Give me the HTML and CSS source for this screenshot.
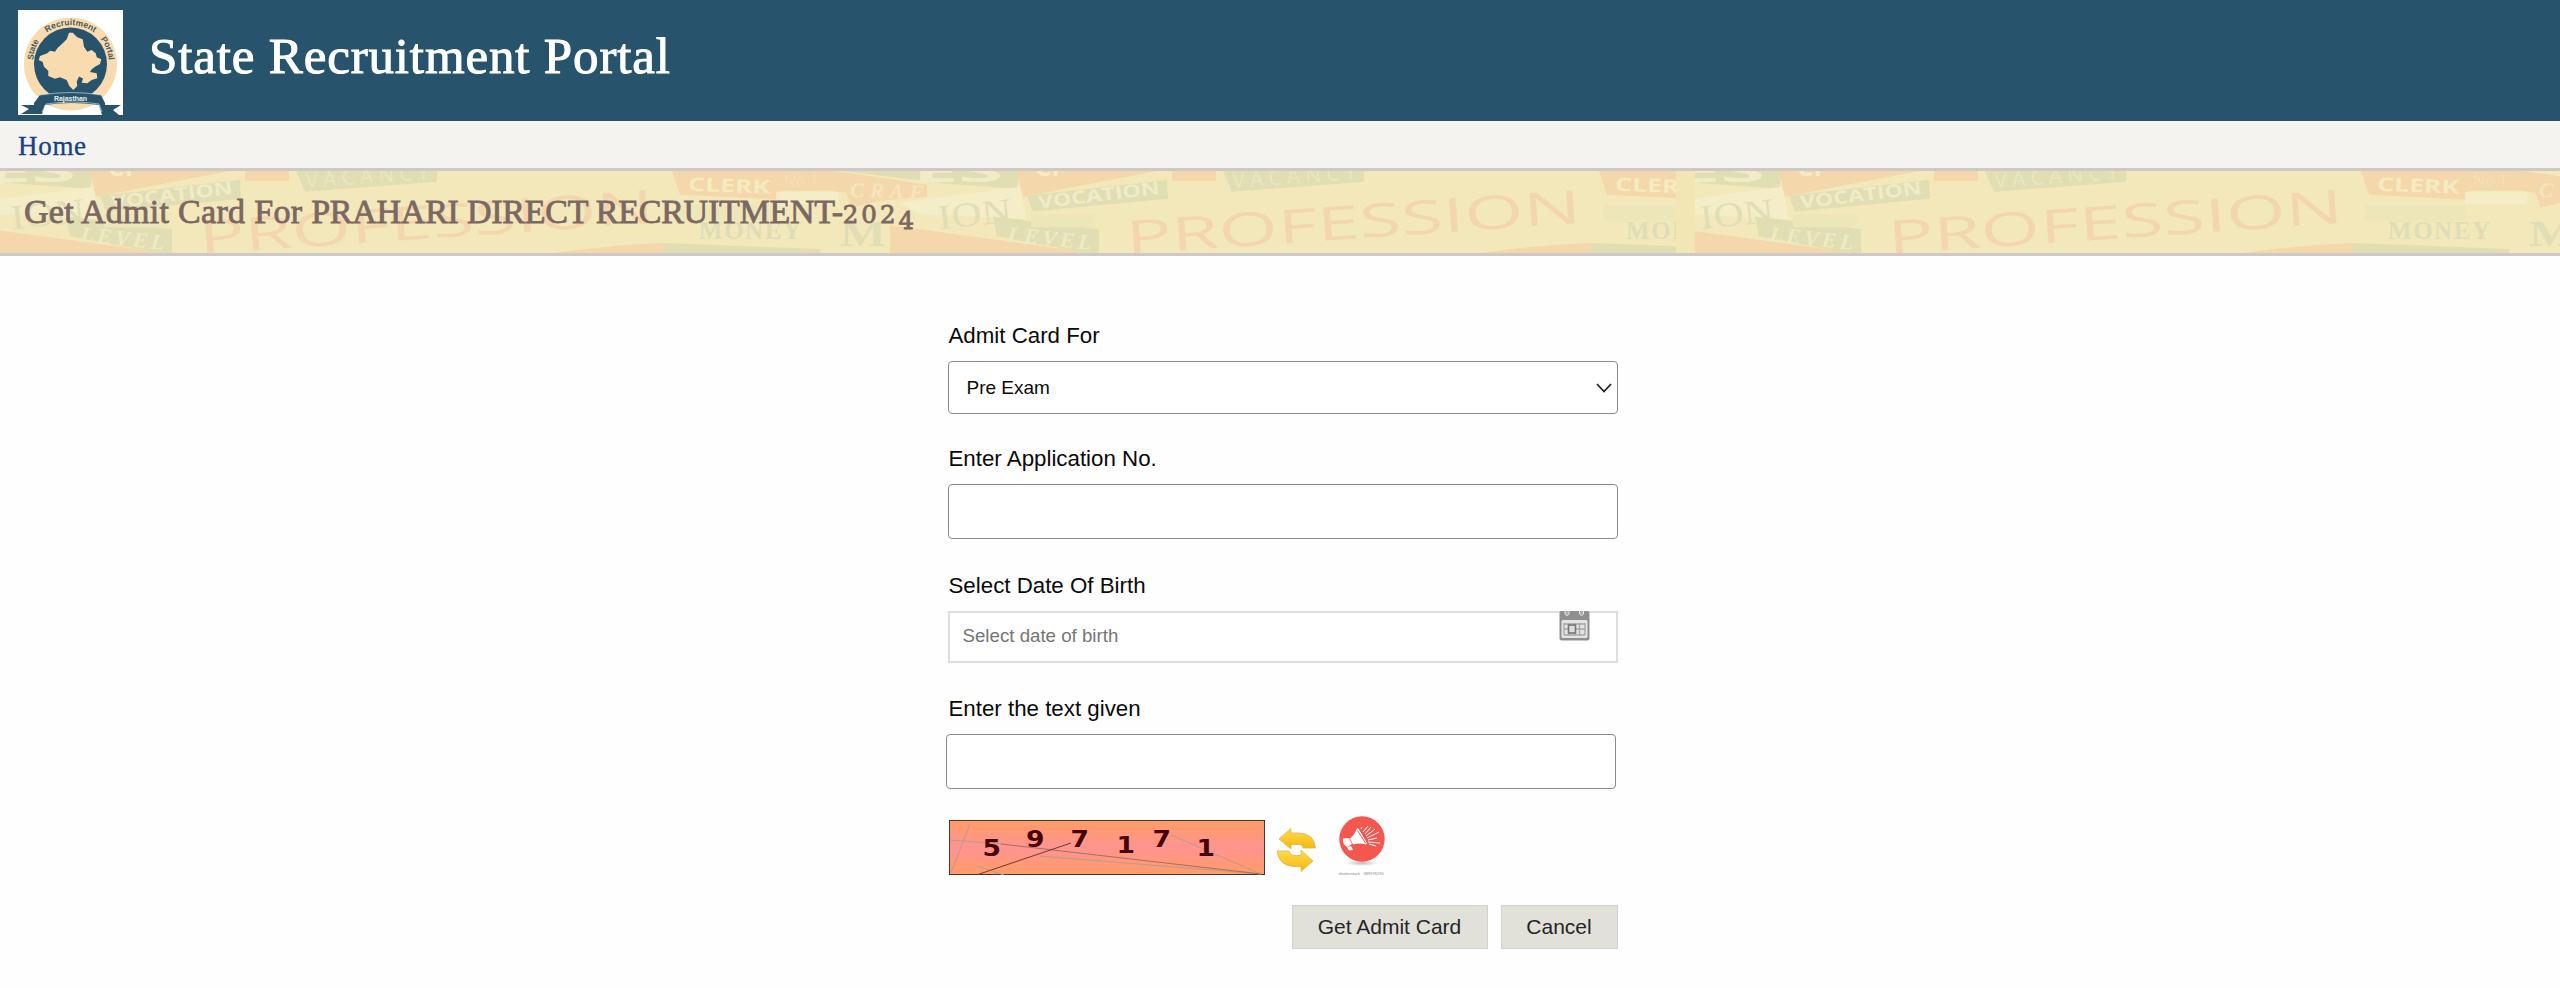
FILE: index.html
```
<!DOCTYPE html>
<html>
<head>
<meta charset="UTF-8">
<title>State Recruitment Portal</title>
<link rel="stylesheet" href="styles.css">
</head>
<body>

<div class="header">
	<svg class="logo" viewBox="0 0 105 105">
		<defs>
			<path id="arcLeft" d="M15.300 50A38 38 0 0 1 24 27"/>
			<path id="arcTop" d="M29 22.500A41 41 0 0 1 76 22.500"/>
			<path id="arcRight" d="M82.500 29A40 40 0 0 1 91 54"/>
		</defs>
		<rect width="105" height="105" fill="#fff"/>
		<circle cx="52.500" cy="54" r="46.500" fill="#f8dbae"/>
		<circle cx="52.500" cy="54" r="36.500" fill="#27546c"/>
		<path fill="#f8dbae" d="M51 22.700L54.700 22.700 59.300 27.300 64.700 29.300 66 36.700 69.300 41.700 73.700 40 77.700 43.300 78.700 47.300 83.300 49.300 82 54 77 56.700 73.700 59.300 72 62 78.700 63.300 79.300 68.300 73.700 70 69.300 73.300 63.700 72.700 65 68.500 61 66.500 58.700 71.700 59.300 76 55.300 80 51.300 76 48.700 70 42 67.300 37 68.700 30.300 66 30.300 60.700 26 56.700 24.700 52 20.700 50 22 46 29.300 43.300 32 40.700 37 41.700 39.300 38.300 44.700 33.300 48.700 29.300z"/>
		<path fill="#27546c" d="M3 95h13v-2l6-8q31-6 61 0l4 8v2h16l-8 5 6 5H84l-3-10q-28-4-54 0l-3 9H3l8-5z"/>
		<path fill="none" stroke="#dfe8ec" stroke-width=".6" d="M22 85q31-5 61 0M24 102l4-8q26-4 53 0l3 8"/>
		<text class="logo-text"><textPath href="#arcLeft" textLength="20">State</textPath></text>
		<text class="logo-text"><textPath href="#arcTop" textLength="50">Recruitment</textPath></text>
		<text class="logo-text"><textPath href="#arcRight" textLength="23">Portal</textPath></text>
		<text class="logo-ribbon" x="36" y="91" textLength="33">Rajasthan</text>
	</svg>
	<div class="site-name">State Recruitment Portal</div>
</div>

<div class="menu"><a href="#">Home</a></div>

<div class="banner">
	<svg class="banner-bg" viewBox="0 0 2560 83" preserveAspectRatio="none">
		<defs>
			<clipPath id="cut"><rect x="0" y="0" width="1676" height="83"/></clipPath>
			<clipPath id="last"><rect x="1695" y="0" width="865" height="83"/></clipPath>
			<g id="collage">
				<path fill="#f2e8ba" d="M0 0H960V83H0z"/>
				<path fill="#e0deb2" d="M-84 0H93L90 18 20 13z"/>
				<path fill="#f4d7aa" d="M90 0H230L96 26zM-37 55L165 83H-37z"/>
				<path fill="#f5edc8" d="M-27 32L93 16 100 49 -10 43z"/>
				<path fill="#e0deb2" d="M100 25L240 9 241 28 106 41zM66 46L172 59V83H160L70 66zM296 0H437V11L305 21z"/>
				<path fill="#f4d7aa" d="M245 0h44v10h-44zM672 0H835L955 18 950 24 880 30 852 37 846 22 832 20H780V29L680 24z"/>
				<path fill="#f5edc8" d="M776 21H838V34H776z" opacity=".8"/>
				<path fill="#ece6b9" d="M676 35H776V50H676zM104 44H168V57H104z"/>
				<path fill="#f4d7aa" d="M554 83Q610 75 664 73V83z"/>
				<path fill="#e0deb2" d="M664 83V73L820 79V83z"/>
				<text class="c-sans" x="-14" y="11" textLength="90" lengthAdjust="spacingAndGlyphs" font-size="30" fill="#f2ebc7">ES</text>
				<text class="c-sans" x="108" y="5" font-size="26" fill="#f6ebc6">CI</text>
				<text class="c-sans" x="112" y="38" transform="rotate(-7 112 38)" textLength="122" lengthAdjust="spacingAndGlyphs" font-size="18" fill="#f0ebc8">VOCATION</text>
				<text class="c-serif" x="12" y="59" transform="rotate(-6 12 59)" textLength="74" lengthAdjust="spacingAndGlyphs" font-size="35" fill="#e1deb6">ION</text>
				<text class="c-italic" x="80" y="71" transform="rotate(6 80 71)" textLength="84" font-size="22" fill="#eeeac6">LEVEL</text>
				<text class="c-thin" x="306" y="17" transform="rotate(-4 306 17)" textLength="124" font-size="21" fill="#eae6bf">VACANCY</text>
				<text class="c-thin" x="200" y="84" transform="rotate(-4 204 84)" textLength="456" lengthAdjust="spacingAndGlyphs" font-size="47" fill="#f3d5ae">PROFESSION</text>
				<text class="c-sans" x="688" y="20" transform="rotate(2 688 20)" textLength="82" lengthAdjust="spacingAndGlyphs" font-size="19" fill="#f5ebc1">CLERK</text>
				<text class="c-thin" x="784" y="15" font-size="16" fill="#f4dfb6">No.1</text>
				<text class="c-bold" x="699" y="69" textLength="102" font-size="25" fill="#dfddb8">MONEY</text>
				<text class="c-bold" x="840" y="76" textLength="46" lengthAdjust="spacingAndGlyphs" font-size="36" fill="#e1deb6">M</text>
				<text class="c-italic" x="850" y="26" transform="rotate(2 850 26)" textLength="92" font-size="21" fill="#f5e5bf">CRAFT</text>
			</g>
		</defs>
		<rect width="2560" height="83" fill="#f2e6b4"/>
		<g clip-path="url(#cut)">
			<use href="#collage"/>
			<use href="#collage" x="927"/>
		</g>
		<g clip-path="url(#last)">
			<use href="#collage" x="1689"/>
		</g>
	</svg>
	<h1>Get Admit Card For <span class="post">PRAHARI DIRECT RECRUITMENT-</span><span class="num">202<span class="low">4</span></span></h1>
</div>

<form class="admit-form">
	<label for="cardType">Admit Card For</label>
	<div class="field">
		<select id="cardType" class="box select">
			<option>Pre Exam</option>
		</select>
		<svg class="arrow" viewBox="0 0 16 12"><path d="M1 2l7 7.500 7-7.500" fill="none" stroke="#222" stroke-width="1.800"/></svg>
	</div>

	<label for="appNo">Enter Application No.</label>
	<input type="text" id="appNo" class="box">

	<label for="dob">Select Date Of Birth</label>
	<div class="field">
		<input type="text" id="dob" class="box date" placeholder="Select date of birth">
		<svg class="calendar" viewBox="0 0 31 30">
			<rect x=".5" y="0" width="30" height="29.500" rx="2" fill="#8f8f8f"/>
			<rect x="2.500" y="9" width="26" height="18" rx="1.500" fill="#e4e4e4"/>
			<path d="M6 0v3q2 3 4 0V0M20.500 0v3q2 3 4 0V0" fill="#aaa" stroke="#e6e6e6"/>
			<path d="M5 13h21M5 18h21M5 24h21M5 12v12M10 12v12M15.500 12v12M20.500 12v12M26 12v12" stroke="#a5a5a5" stroke-width="1.300"/>
			<rect x="9.500" y="14" width="7" height="8" fill="#ddd" stroke="#777" stroke-width="1.600"/>
		</svg>
	</div>

	<label for="captcha">Enter the text given</label>
	<input type="text" id="captcha" class="box captcha-input">

	<div class="captcha-row">
		<svg class="captcha" viewBox="0 0 316 55">
			<defs>
				<linearGradient id="salmon" x1="0" y1="0" x2="0" y2="1">
					<stop offset="0" stop-color="#ff9c66"/>
					<stop offset=".5" stop-color="#ff9490"/>
					<stop offset="1" stop-color="#ff9c66"/>
				</linearGradient>
			</defs>
			<rect x=".5" y=".5" width="315" height="54" fill="url(#salmon)" stroke="#4a3430"/>
			<g fill="none" stroke="#b99b92">
				<path d="M2 53L21 4M1 20L55 24M90 36L312 54M222 15L312 54M28 46L55 55"/>
				<path d="M52 24L312 54" stroke="#a07068"/>
				<path d="M29 54.500L122 23" stroke="#6e3a30"/>
			</g>
			<g class="digits">
				<text x="33.500" y="36" textLength="18.500" lengthAdjust="spacingAndGlyphs">5</text>
				<text x="77" y="26.500" textLength="18.500" lengthAdjust="spacingAndGlyphs">9</text>
				<text x="121.500" y="26.500" textLength="18.500" lengthAdjust="spacingAndGlyphs">7</text>
				<text x="167.500" y="32.500" textLength="18.500" lengthAdjust="spacingAndGlyphs">1</text>
				<text x="203.500" y="26.500" textLength="18.500" lengthAdjust="spacingAndGlyphs">7</text>
				<text x="247.500" y="35.500" textLength="18.500" lengthAdjust="spacingAndGlyphs">1</text>
			</g>
		</svg>
		<svg class="refresh" viewBox="0 0 42 46">
			<defs>
				<linearGradient id="gold" x1="0" y1="0" x2="0" y2="1">
					<stop offset="0" stop-color="#ffdc4c"/>
					<stop offset="1" stop-color="#f7b60c"/>
				</linearGradient>
			</defs>
			<g fill="url(#gold)" stroke="#dcb65a" stroke-width=".8">
				<path d="M3 12L15 1.500V6H22Q38 6 39.500 21H27Q26 17 22 17.500H15V22z"/>
				<path d="M1 24H13Q14 28 18 28.500H25V23L37 34 25 44.500V39.500H18Q3 39 1 24z"/>
			</g>
		</svg>
		<svg class="speaker" viewBox="0 0 50 64">
			<defs>
				<radialGradient id="shade"><stop offset="0" stop-color="#bbb"/><stop offset="1" stop-color="#fff"/></radialGradient>
			</defs>
			<ellipse cx="25" cy="47" rx="17" ry="3" fill="url(#shade)"/>
			<circle cx="25" cy="23" r="22.700" fill="#f4574f"/>
			<path fill="#fff" d="M19.500 13l1.500-1 9 15-1 1.500q-6-2-13 0l-3-6q5-4 6.500-9.500zM6 22.500l6-.500 3 6-5 3q-5-3-4-8.500zM10 31l4-1 2 4-4 .500z"/>
			<path fill="none" stroke="#f4574f" d="M20.500 14.500l8 12.500"/>
			<path fill="none" stroke="#fff" stroke-width="1" d="M24 13l1-2M26 16l5-6M28 18l6-7M29 20l9-7M30 22l12-6M31 24l9-2M31 26l12 1M32 28l7 2"/>
			<text class="credit" x="1.500" y="58.500">shutterstock · 389976190</text>
		</svg>
	</div>

	<div class="buttons">
		<input type="button" class="btn btnGet" value="Get Admit Card">
		<input type="button" class="btn btnCancel" value="Cancel">
	</div>
</form>

</body>
</html>
```
FILE: styles.css
```
* {box-sizing: border-box;}
body {margin: 0; background-color: #fefefe; color: #0a0a0a; font-family: Arial, "Liberation Sans", sans-serif;}

.header {display: flex; height: 121px; padding: 10px 18px; gap: 26px; background-color: #27546c;}
.logo {width: 105px; height: 105px; flex: none;}
.logo-text {font: bold 8.5px "Liberation Sans", sans-serif; fill: #4c5a5b;}
.logo-ribbon {font: bold 7px "Liberation Sans", sans-serif; fill: #e6edf0;}
.site-name {color: #fff; font: 51px/58px "Liberation Serif", serif; letter-spacing: 0.85px; padding-top: 17px; -webkit-text-stroke: 1px #fff; white-space: nowrap;}

.menu {height: 50px; padding: 9px 18px; background-color: #f5f3ef; border-bottom: 3px solid #cdc8ca; font: 27px/32px "Liberation Serif", serif;}
.menu a {color: #164182; text-decoration: none; letter-spacing: 0.7px; -webkit-text-stroke: 0.3px #164182;}

.banner {position: relative; height: 85px; border-bottom: 3px solid #cdc8ca;}
.banner-bg {position: absolute; left: 0; top: 0; width: 100%; height: 82px;}
.banner h1 {position: relative; margin: 0; padding: 21px 24px; color: #7b6763; font: 34px/40px "Liberation Serif", serif; letter-spacing: 0.3px; -webkit-text-stroke: 0.8px #7b6763; white-space: nowrap;}
.post {letter-spacing: -0.25px;}
.num {font-family: "DejaVu Serif", serif; font-size: 24.5px; letter-spacing: 3px; line-height: 1;}
.low {vertical-align: -6px;}
.c-sans {font-family: "Open Sans", sans-serif; font-weight: bold;}
.c-thin {font-family: "Open Sans", sans-serif; font-weight: 400;}
.c-serif {font-family: "Liberation Serif", serif;}
.c-bold {font-family: "Liberation Serif", serif; font-weight: bold;}
.c-italic {font-family: "Liberation Serif", serif; font-style: italic; font-weight: bold;}

.admit-form {display: flex; flex-direction: column; width: 670px; margin: 67px 0 0 947.5px;}
.admit-form label {height: 38px; padding-left: 1px; font-size: 22.3px; line-height: 25px;}
.field {position: relative; display: flex;}
.box {display: block; width: 670px; height: 55px; margin: 0 0 56px; padding: 0 14px; background-color: #fff; border: 1.5px solid #8b8b8b; border-radius: 4px; color: #0a0a0a; font: 19px "Liberation Sans", sans-serif; outline: none;}
.select {height: 53px; padding: 0 18px 1px; margin-bottom: 32px; appearance: none;}
.arrow {position: absolute; right: 6px; top: 21px; width: 16px; height: 12px;}
#appNo {margin-bottom: 34px;}
.date {height: 52px; padding: 0 13px 2px; margin-bottom: 33px; border: 2px solid #dedede; border-radius: 0; font-size: 18.7px;}
.date::placeholder {color: #757575;}
.calendar {position: absolute; left: 611px; top: 0; width: 31px; height: 30px;}
.captcha-input {margin: 0 0 29px -2px;}

.captcha-row {display: flex; height: 63px; padding-left: 1px;}
.captcha {width: 316px; height: 55px; margin-top: 2px;}
.digits text {font: bold 23px "DejaVu Sans", sans-serif; fill: #470008;}
.refresh {width: 42px; height: 46px; margin: 9px 0 0 11px;}
.speaker {width: 50px; height: 64px; margin: -2px 0 0 19px; overflow: visible;}
.credit {font: 4px "Liberation Sans", sans-serif; fill: #888;}

.buttons {display: flex; justify-content: flex-end; gap: 13px; margin-top: 24px;}
.btn {height: 44px; padding: 0 0 1px; background-color: #e1e1da; border: 1px solid #d2d2ce; border-radius: 0; color: #262626; font: 21px "Liberation Sans", sans-serif;}
.btnGet {width: 196px;}
.btnCancel {width: 117px;}
```
